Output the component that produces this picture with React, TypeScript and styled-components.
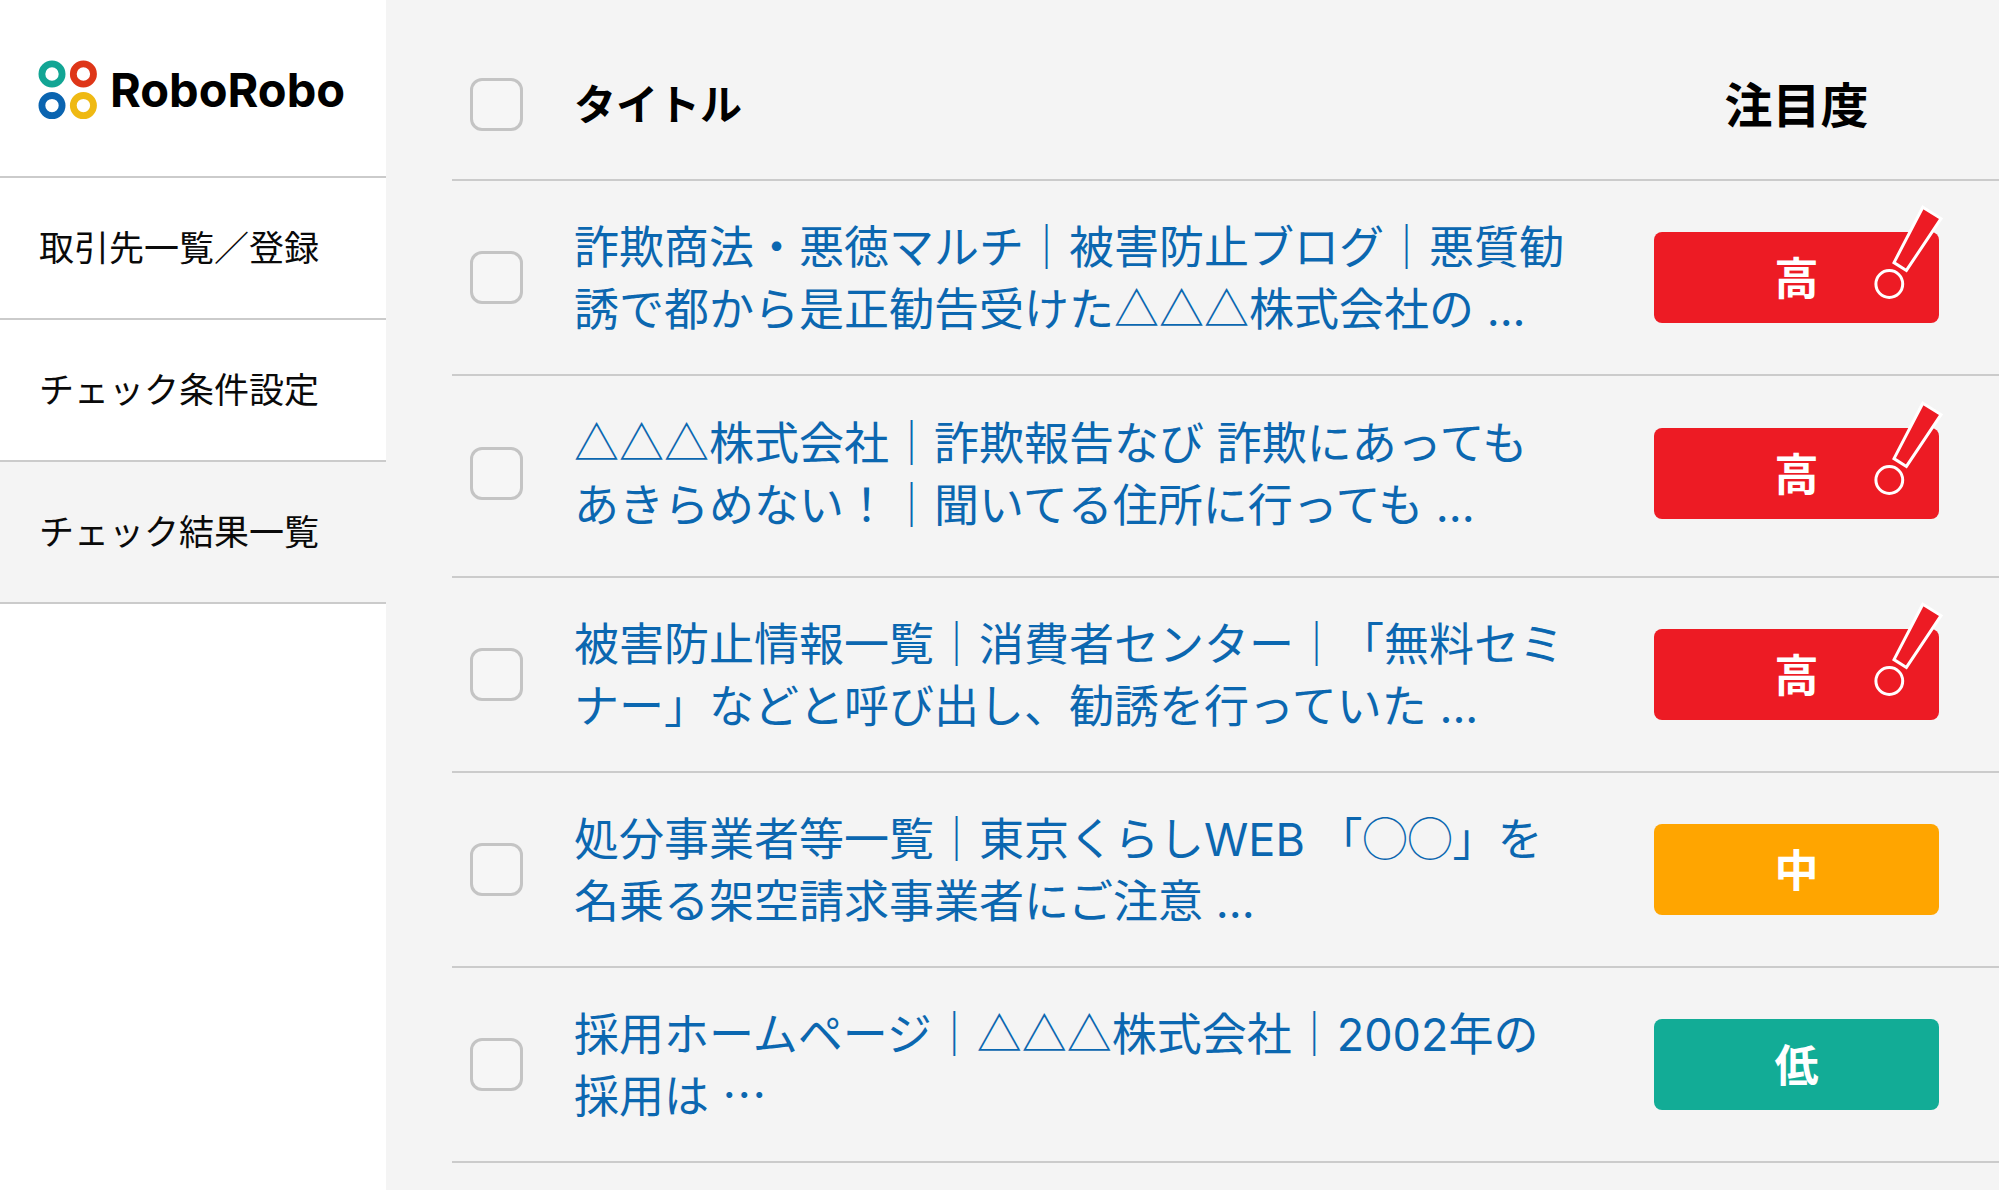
import React from "react";
import styled, { createGlobalStyle } from "styled-components";

const GlobalStyle = createGlobalStyle`
  *, *::before, *::after { box-sizing: border-box; }
  body {
    margin: 0;
    background: #f4f4f4;
    color: #0a0a0a;
    font-family: "Noto Sans CJK JP", "Noto Sans", sans-serif;
  }
`;

const Layout = styled.div`
  display: grid;
  grid-template-columns: 386px minmax(0, 1fr);
  min-height: 100vh;
`;

const Sidebar = styled.aside`
  background: #fff;
`;

const Brand = styled.a`
  display: flex;
  align-items: center;
  gap: 12px;
  height: 178px;
  padding: 4px 0 0 38px;
  border-bottom: 2px solid #cbcbcb;
  color: #000;
  font-family: Inter, "Liberation Sans", sans-serif;
  font-size: 47px;
  font-weight: 700;
  line-height: 58px;
  text-decoration: none;
`;

const Menu = styled.ul`
  margin: 0;
  padding: 0;
  list-style: none;
`;

const MenuLink = styled.a<{ $active?: boolean }>`
  display: flex;
  align-items: center;
  height: 142px;
  padding: 0 0 4px 39px;
  border-bottom: 2px solid #cbcbcb;
  background: ${(p) => (p.$active ? "#f4f4f4" : "#fff")};
  color: inherit;
  font-size: 35px;
  line-height: 52px;
  text-decoration: none;
  white-space: nowrap;
`;

const Main = styled.main`
  padding: 29px 0 0 66px;
`;

const Table = styled.table`
  width: 100%;
  table-layout: fixed;
  border-collapse: separate;
  border-spacing: 0;
`;

const CheckCol = styled.col`
  width: 122px;
`;

const LevelCol = styled.col`
  width: 405px;
`;

const HeadCell = styled.th<{ $center?: boolean }>`
  height: 152px;
  padding: 0;
  border-bottom: 2px solid #cbcbcb;
  color: #000;
  font-size: ${(p) => (p.$center ? "48px" : "42px")};
  font-weight: 700;
  line-height: 62px;
  text-align: ${(p) => (p.$center ? "center" : "left")};
`;

const HeadLabel = styled.span`
  display: block;
  padding-bottom: 4px;
`;

const Row = styled.tr<{ $roomy?: boolean }>`
  height: ${(p) => (p.$roomy ? "202px" : "195px")};
  & > td {
    padding: ${(p) => (p.$roomy ? "0 0 5px" : "0")};
  }
`;

const Cell = styled.td`
  border-bottom: 2px solid #cbcbcb;
  vertical-align: middle;
`;

const Checkbox = styled.input`
  display: block;
  appearance: none;
  width: 53px;
  height: 53px;
  margin: 0 0 0 18px;
  border: 3px solid #c4c4c4;
  border-radius: 12px;
  background: #f6f6f6;
  &:checked {
    background: #0b67b0;
  }
`;

const TitleLink = styled.a`
  display: block;
  padding-bottom: 4px;
  color: #0b67b0;
  font-size: 45px;
  line-height: 62px;
  text-decoration: none;
  white-space: nowrap;
`;

const Latin = styled.span`
  font-family: Inter, "Liberation Sans", sans-serif;
  line-height: 1;
`;

const Badge = styled.div<{ $color: string }>`
  position: relative;
  display: flex;
  align-items: center;
  justify-content: center;
  width: 285px;
  height: 91px;
  margin: 0 auto;
  padding-bottom: 4px;
  border-radius: 8px;
  background: ${(p) => p.$color};
  color: #fff;
  font-size: 44px;
  font-weight: 700;
  line-height: 62px;
`;

const AlertMark = styled.svg`
  position: absolute;
  top: -30px;
  right: -5px;
`;

type Level = "高" | "中" | "低";

const levelColors: Record<Level, string> = {
  高: "#ed1b24",
  中: "#ffa500",
  低: "#12ac96",
};

const menu = [
  { label: "取引先一覧／登録" },
  { label: "チェック条件設定" },
  { label: "チェック結果一覧", active: true },
];

const results: { lines: [string, string]; level: Level; roomy?: boolean }[] = [
  {
    lines: [
      "詐欺商法・悪徳マルチ｜被害防止ブログ｜悪質勧",
      "誘で都から是正勧告受けた△△△株式会社の ...",
    ],
    level: "高",
  },
  {
    lines: [
      "△△△株式会社｜詐欺報告なび 詐欺にあっても",
      "あきらめない！｜聞いてる住所に行っても ...",
    ],
    level: "高",
    roomy: true,
  },
  {
    lines: [
      "被害防止情報一覧｜消費者センター｜「無料セミ",
      "ナー」などと呼び出し、勧誘を行っていた ...",
    ],
    level: "高",
  },
  {
    lines: [
      "処分事業者等一覧｜東京くらしWEB 「◯◯」を",
      "名乗る架空請求事業者にご注意 ...",
    ],
    level: "中",
  },
  {
    lines: ["採用ホームページ｜△△△株式会社｜2002年の", "採用は …"],
    level: "低",
  },
];

function LogoMark() {
  return (
    <svg width="60" height="60" viewBox="0 0 60 60" fill="none" strokeWidth="6.8" aria-hidden="true">
      <circle cx="14" cy="14" r="10.1" stroke="#12a594" />
      <circle cx="45.4" cy="14" r="10.1" stroke="#de3618" />
      <circle cx="14" cy="45.6" r="10.1" stroke="#0a64b0" />
      <circle cx="45.4" cy="45.6" r="10.1" stroke="#efb913" />
    </svg>
  );
}

/* Sets Latin letters, digits, spaces and full stops in the Latin face. */
function MixedText({ text }: { text: string }) {
  return (
    <>
      {text.split(/([A-Za-z0-9. ]+)/).map((part, i) =>
        i % 2 === 1 ? <Latin key={i}>{part}</Latin> : part
      )}
    </>
  );
}

function LevelBadge({ level }: { level: Level }) {
  return (
    <Badge $color={levelColors[level]}>
      {level}
      {level === "高" && (
        <AlertMark
          width="76"
          height="104"
          viewBox="0 0 76 104"
          fill="#ed1b24"
          stroke="#fff"
          strokeWidth="3"
          aria-hidden="true"
        >
          <path d="M54.8 5.2 L73 16.6 L38.4 68.4 L26 60.6 Z" />
          <circle cx="21.3" cy="82" r="13.4" />
        </AlertMark>
      )}
    </Badge>
  );
}

export default function App() {
  return (
    <>
      <GlobalStyle />
      <Layout>
        <Sidebar>
          <Brand href="#">
            <LogoMark />
            <span>RoboRobo</span>
          </Brand>
          <nav>
            <Menu>
              {menu.map((item) => (
                <li key={item.label}>
                  <MenuLink href="#" $active={item.active} aria-current={item.active ? "page" : undefined}>
                    {item.label}
                  </MenuLink>
                </li>
              ))}
            </Menu>
          </nav>
        </Sidebar>
        <Main>
          <Table>
            <colgroup>
              <CheckCol />
              <col />
              <LevelCol />
            </colgroup>
            <thead>
              <tr>
                <HeadCell>
                  <Checkbox type="checkbox" aria-label="すべて選択" />
                </HeadCell>
                <HeadCell scope="col">
                  <HeadLabel>タイトル</HeadLabel>
                </HeadCell>
                <HeadCell scope="col" $center>
                  <HeadLabel>注目度</HeadLabel>
                </HeadCell>
              </tr>
            </thead>
            <tbody>
              {results.map((item, i) => (
                <Row key={item.lines[0]} $roomy={item.roomy}>
                  <Cell>
                    <Checkbox type="checkbox" aria-labelledby={`title-${i}`} />
                  </Cell>
                  <Cell>
                    <TitleLink href="#" id={`title-${i}`}>
                      <MixedText text={item.lines[0]} />
                      <br />
                      <MixedText text={item.lines[1]} />
                    </TitleLink>
                  </Cell>
                  <Cell>
                    <LevelBadge level={item.level} />
                  </Cell>
                </Row>
              ))}
            </tbody>
          </Table>
        </Main>
      </Layout>
    </>
  );
}
